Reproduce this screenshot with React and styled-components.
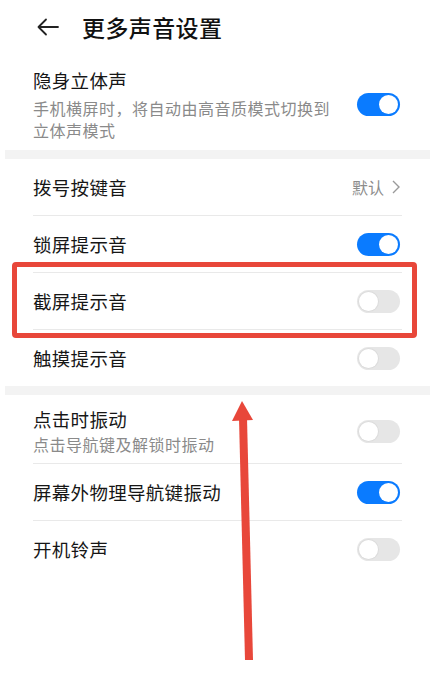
import React from "react";
import styled, { createGlobalStyle } from "styled-components";

const GlobalStyle = createGlobalStyle`
  html, body {
    margin: 0;
    padding: 0;
    background: #fff;
  }
  body {
    font-family: "Noto Sans CJK SC", "Noto Sans", sans-serif;
    color: #1a1a1a;
  }
`;

const Page = styled.div`
  position: relative;
  width: 441px;
  height: 693px;
  padding: 0 11px 0 5px;
  box-sizing: border-box;
  overflow: hidden;
`;

const Header = styled.div`
  height: 58px;
  display: flex;
  align-items: center;
  padding-left: 31px;
  padding-bottom: 4px;
  box-sizing: border-box;
`;

const BackButton = styled.span`
  display: flex;
  width: 24px;
  height: 18px;
  margin-right: 22px;
`;

const Title = styled.h1`
  margin: 0;
  font-size: 23px;
  font-weight: 500;
  letter-spacing: 0.4px;
  color: #111;
`;

const Band = styled.div`
  height: 9px;
  background: #f3f3f3;
`;

const Row = styled.div`
  position: relative;
  margin: 0 28px;
  min-height: ${(p) => (p.$tall ? "auto" : "56px")};
  padding: ${(p) => p.$pad || "0"};
  display: flex;
  align-items: center;
  justify-content: space-between;
  border-bottom: ${(p) => (p.$last ? "none" : "1px solid #e9e9e9")};
`;

const Texts = styled.div`
  display: flex;
  flex-direction: column;
  max-width: 304px;
`;

const Label = styled.div`
  font-size: 18.5px;
  line-height: 24px;
  letter-spacing: 0.3px;
  color: #161616;
`;

const Sub = styled.div`
  margin-top: ${(p) => p.$gap || "2px"};
  font-size: 16px;
  line-height: 22px;
  letter-spacing: 0.5px;
  color: #8a8a8a;
`;

const Value = styled.div`
  display: flex;
  align-items: center;
  gap: 8px;
  font-size: 16px;
  color: #8c8c8c;
  margin-right: 2px;
`;

const Track = styled.div`
  position: relative;
  width: 43px;
  height: 23px;
  border-radius: 12px;
  background: ${(p) => (p.$on ? "#0a7bff" : "#e6e6e6")};
  flex-shrink: 0;
  margin-right: 2px;
`;

const Knob = styled.div`
  position: absolute;
  top: 2px;
  left: ${(p) => (p.$on ? "22px" : "2px")};
  width: 19px;
  height: 19px;
  border-radius: 50%;
  background: #fff;
  box-shadow: ${(p) => (p.$on ? "none" : "0 0 0 1px #dcdcdc")};
`;

const Highlight = styled.div`
  position: absolute;
  left: -21px;
  right: -15px;
  top: -11px;
  bottom: -9px;
  border: 5px solid #e8473a;
  border-radius: 4px;
  pointer-events: none;
`;

const ArrowLayer = styled.svg`
  position: absolute;
  left: 220px;
  top: 398px;
  pointer-events: none;
`;

function Toggle({ on }) {
  return (
    <Track $on={on}>
      <Knob $on={on} />
    </Track>
  );
}

function Chevron() {
  return (
    <svg width="8" height="14" viewBox="0 0 8 14">
      <path d="M1 1 L7 7 L1 13" fill="none" stroke="#9a9a9a" strokeWidth="1.4" />
    </svg>
  );
}

export default function App() {
  return (
    <>
      <GlobalStyle />
      <Page>
        <Header>
          <BackButton>
            <svg width="24" height="18" viewBox="0 0 24 18">
              <path
                d="M22 9 H2.5 M10 1.5 L2.5 9 L10 16.5"
                fill="none"
                stroke="#222"
                strokeWidth="1.8"
                strokeLinecap="round"
                strokeLinejoin="round"
              />
            </svg>
          </BackButton>
          <Title>更多声音设置</Title>
        </Header>

        <Row $tall $last $pad="10px 0 9px">
          <Texts>
            <Label>隐身立体声</Label>
            <Sub $gap="5px">手机横屏时，将自动由高音质模式切换到立体声模式</Sub>
          </Texts>
          <Toggle on />
        </Row>

        <Band />

        <Row>
          <Label>拨号按键音</Label>
          <Value>
            默认
            <Chevron />
          </Value>
        </Row>
        <Row>
          <Label>锁屏提示音</Label>
          <Toggle on />
        </Row>
        <Row>
          <Label>截屏提示音</Label>
          <Toggle />
          <Highlight />
        </Row>
        <Row $last>
          <Label>触摸提示音</Label>
          <Toggle />
        </Row>

        <Band />

        <Row $tall $pad="12px 0 8px">
          <Texts>
            <Label>点击时振动</Label>
            <Sub>点击导航键及解锁时振动</Sub>
          </Texts>
          <Toggle />
        </Row>
        <Row>
          <Label>屏幕外物理导航键振动</Label>
          <Toggle on />
        </Row>
        <Row $last>
          <Label>开机铃声</Label>
          <Toggle />
        </Row>

        <ArrowLayer width="44" height="270" viewBox="0 0 44 270">
          <path d="M23 20 L29 262" stroke="#e8473a" strokeWidth="8" fill="none" />
          <polygon points="22,3 12,23 33,22" fill="#e8473a" />
        </ArrowLayer>
      </Page>
    </>
  );
}
